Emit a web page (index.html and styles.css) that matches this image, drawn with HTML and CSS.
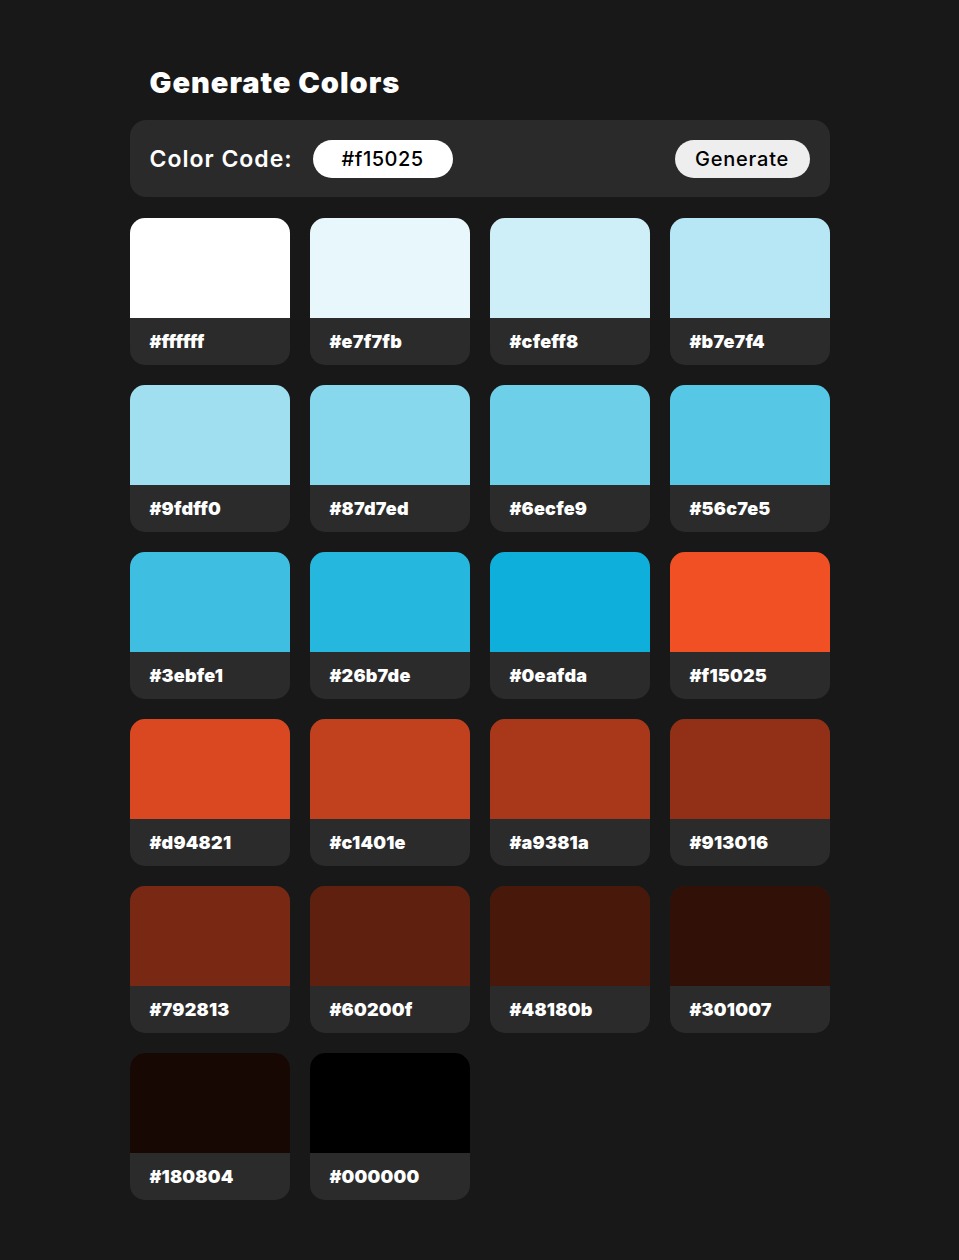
FILE: index.html
```html
<!DOCTYPE html>
<html lang="en">
<head>
<meta charset="utf-8">
<title>Generate Colors</title>
<link rel="stylesheet" href="styles.css">
</head>
<body>
<main class="app">
  <h1 class="title">Generate Colors</h1>
  <section class="panel">
    <label class="label">Color Code:</label>
    <div class="code-input">#f15025</div>
    <button class="btn">Generate</button>
  </section>
  <section class="grid">
    <div class="card"><div class="swatch" style="background:#ffffff"></div><div class="hex">#ffffff</div></div>
    <div class="card"><div class="swatch" style="background:#e7f7fb"></div><div class="hex">#e7f7fb</div></div>
    <div class="card"><div class="swatch" style="background:#cfeff8"></div><div class="hex">#cfeff8</div></div>
    <div class="card"><div class="swatch" style="background:#b7e7f4"></div><div class="hex">#b7e7f4</div></div>
    <div class="card"><div class="swatch" style="background:#9fdff0"></div><div class="hex">#9fdff0</div></div>
    <div class="card"><div class="swatch" style="background:#87d7ed"></div><div class="hex">#87d7ed</div></div>
    <div class="card"><div class="swatch" style="background:#6ecfe9"></div><div class="hex">#6ecfe9</div></div>
    <div class="card"><div class="swatch" style="background:#56c7e5"></div><div class="hex">#56c7e5</div></div>
    <div class="card"><div class="swatch" style="background:#3ebfe1"></div><div class="hex">#3ebfe1</div></div>
    <div class="card"><div class="swatch" style="background:#26b7de"></div><div class="hex">#26b7de</div></div>
    <div class="card"><div class="swatch" style="background:#0eafda"></div><div class="hex">#0eafda</div></div>
    <div class="card"><div class="swatch" style="background:#f15025"></div><div class="hex">#f15025</div></div>
    <div class="card"><div class="swatch" style="background:#d94821"></div><div class="hex">#d94821</div></div>
    <div class="card"><div class="swatch" style="background:#c1401e"></div><div class="hex">#c1401e</div></div>
    <div class="card"><div class="swatch" style="background:#a9381a"></div><div class="hex">#a9381a</div></div>
    <div class="card"><div class="swatch" style="background:#913016"></div><div class="hex">#913016</div></div>
    <div class="card"><div class="swatch" style="background:#792813"></div><div class="hex">#792813</div></div>
    <div class="card"><div class="swatch" style="background:#60200f"></div><div class="hex">#60200f</div></div>
    <div class="card"><div class="swatch" style="background:#48180b"></div><div class="hex">#48180b</div></div>
    <div class="card"><div class="swatch" style="background:#301007"></div><div class="hex">#301007</div></div>
    <div class="card"><div class="swatch" style="background:#180804"></div><div class="hex">#180804</div></div>
    <div class="card"><div class="swatch" style="background:#000000"></div><div class="hex">#000000</div></div>
  </section>
</main>
</body>
</html>
```
FILE: styles.css
```css
html, body {
  margin: 0;
  padding: 0;
  background: #181818;
}
body {
  font-family: "Inter", "Open Sans", sans-serif;
  color: #ffffff;
  min-height: 1260px;
}
.app {
  width: 700px;
  margin: 0 auto;
  padding-top: 64px;
}
.title {
  margin: 0 0 18px 20px;
  font-size: 29px;
  font-weight: 900;
  line-height: 38px;
  letter-spacing: 1px;
}
.panel {
  display: flex;
  align-items: center;
  height: 77px;
  padding: 0 20px;
  box-sizing: border-box;
  background: #2a2a2a;
  border-radius: 16px;
}
.label {
  font-size: 23px;
  font-weight: 600;
  letter-spacing: 1px;
  margin-right: 20px;
}
.code-input {
  width: 140px;
  height: 38px;
  border-radius: 19px;
  background: #ffffff;
  color: #000000;
  font-size: 20px;
  font-weight: 500;
  letter-spacing: 0.5px;
  display: flex;
  align-items: center;
  justify-content: center;
}
.btn {
  margin-left: auto;
  width: 135px;
  height: 38px;
  border: none;
  border-radius: 19px;
  background: #eeeeee;
  color: #000000;
  font-family: inherit;
  font-size: 20px;
  font-weight: 500;
  letter-spacing: 0.8px;
  padding: 0;
}
.grid {
  margin-top: 21px;
  display: grid;
  grid-template-columns: repeat(4, 160px);
  gap: 20px;
}
.card {
  border-radius: 15px;
  overflow: hidden;
  background: #2b2b2b;
}
.swatch {
  height: 100px;
}
.hex {
  height: 47px;
  padding-left: 20px;
  display: flex;
  align-items: center;
  font-size: 18px;
  font-weight: 900;
  letter-spacing: 0.2px;
}
```
